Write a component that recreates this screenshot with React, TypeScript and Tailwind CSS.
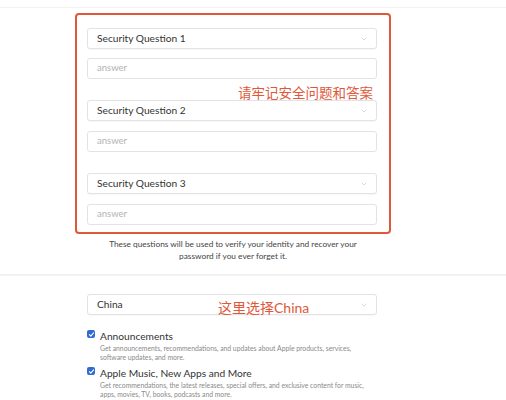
import { ChevronDown } from 'lucide-react';

const font = { fontFamily: 'Lato, "Noto Sans CJK SC", sans-serif' };

function Select({ label }: { label: string }) {
  return (
    <div className="flex h-[21px] w-[290px] items-center justify-between rounded-[3px] border border-[#e3e3e3] bg-white pl-[9px] pr-[8px] shadow-[0_1px_1px_rgba(0,0,0,0.03)]">
      <span className="text-[10.2px] text-[#333]">{label}</span>
      <ChevronDown className="h-[8px] w-[8px] text-[#b5b5b5]" strokeWidth={1.5} />
    </div>
  );
}

function Answer() {
  return (
    <div className="flex h-[21px] w-[290px] items-center rounded-[3px] border border-[#e3e3e3] bg-white pl-[9px]">
      <span className="text-[9.5px] text-[#b3b3b3]">answer</span>
    </div>
  );
}

function Check({ title, desc }: { title: string; desc: string }) {
  return (
    <div className="flex gap-[5px]">
      <div className="flex h-[8px] w-[8px] shrink-0 items-center justify-center rounded-[2px] bg-[#2f6bd0]">
        <svg viewBox="0 0 10 10" className="h-[7px] w-[7px]">
          <path d="M2 5.2l2 2 4-4.4" fill="none" stroke="white" strokeWidth="1.6" strokeLinecap="round" strokeLinejoin="round" />
        </svg>
      </div>
      <div className="w-[282px]">
        <div className="text-[10.2px] leading-[13px] text-[#333]">{title}</div>
        <div className="mt-[1px] text-[6.8px] leading-[9px] text-[#8a8a8a]">{desc}</div>
      </div>
    </div>
  );
}

export default function App() {
  return (
    <div className="h-[400px] w-[506px] overflow-hidden bg-white" style={font}>
      <div className="h-[8px] border-b border-[#f3f3f3]" />
      <div className="ml-[75px] mt-[5px] w-[316px]">
        <div className="relative rounded-[4px] border-2 border-[#e0583a] px-[10px] pb-[7px] pt-[13px]">
          <div className="flex flex-col">
            <Select label="Security Question 1" />
            <div className="mt-[9px]"><Answer /></div>
            <div className="mt-[21px]"><Select label="Security Question 2" /></div>
            <div className="mt-[10px]"><Answer /></div>
            <div className="mt-[21px]"><Select label="Security Question 3" /></div>
            <div className="mt-[10px]"><Answer /></div>
          </div>
          <span className="absolute right-[16px] top-[70px] text-[13.5px] leading-[16px] text-[#e0583a]">
            请牢记安全问题和答案
          </span>
        </div>
        <p className="mt-[4px] text-center text-[8.3px] leading-[12px] text-[#444]">
          These questions will be used to verify your identity and recover your
          <br />
          password if you ever forget it.
        </p>
      </div>
      <div className="mt-[12px] h-[2px] bg-[#f2f2f2]" />
      <div className="ml-[87px] mt-[18px] w-[290px]">
        <div className="relative">
          <Select label="China" />
          <span className="absolute left-[131px] top-[6px] text-[14px] leading-[15px] text-[#e0583a]">
            这里选择China
          </span>
        </div>
        <div className="mt-[15px] flex flex-col gap-[5px]">
          <Check
            title="Announcements"
            desc="Get announcements, recommendations, and updates about Apple products, services, software updates, and more."
          />
          <Check
            title="Apple Music, New Apps and More"
            desc="Get recommendations, the latest releases, special offers, and exclusive content for music, apps, movies, TV, books, podcasts and more."
          />
        </div>
      </div>
    </div>
  );
}
